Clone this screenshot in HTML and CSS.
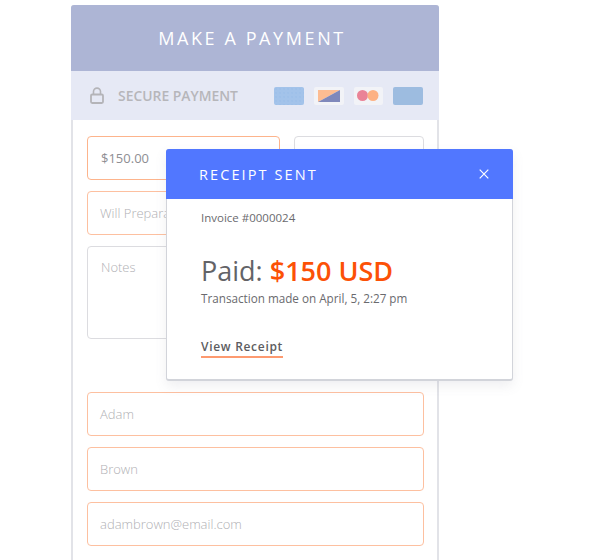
FILE: index.html
```html
<!DOCTYPE html>
<html lang="en">
<head>
    <meta charset="UTF-8">
    <title>Make a payment</title>
    <link rel="stylesheet" href="styles.css">
</head>

<body>
    <div class="wrap">
        <div class="payment">
            <div class="paymentTitle">MAKE A PAYMENT</div>
            <div class="secureBar">
                <svg class="lock" width="14" height="17" viewBox="0 0 14 17">
                    <path d="M3.5 7.5V4.6a3.5 3.5 0 0 1 7 0v2.9" fill="none" stroke="#b4b4b8" stroke-width="1.6"/>
                    <rect x="1" y="7.5" width="12" height="8.5" rx="1.2" fill="none" stroke="#b4b4b8" stroke-width="1.8"/>
                </svg>
                <span class="secureLabel">SECURE PAYMENT</span>
                <div class="cards">
                    <div class="cardIcon cardBlue"></div>
                    <div class="cardIcon cardPale">
                        <svg width="22" height="12" viewBox="0 0 22 12">
                            <polygon points="0,0 22,0 0,12" fill="#fdbc92"/>
                            <polygon points="22,0 22,12 0,12" fill="#7f88bb"/>
                        </svg>
                    </div>
                    <div class="cardIcon cardPale">
                        <svg width="22" height="11" viewBox="0 0 22 11">
                            <circle cx="5.5" cy="5.5" r="5.5" fill="#ea8397"/>
                            <circle cx="16" cy="5.5" r="5.5" fill="#fdb183"/>
                        </svg>
                    </div>
                    <div class="cardIcon cardSteel"></div>
                </div>
            </div>
            <div class="form">
                <div class="row">
                    <div class="field amount">$150.00</div>
                    <div class="field plain"></div>
                </div>
                <div class="field">Will Prepara</div>
                <div class="field notes">Notes</div>
                <div class="spacer"></div>
                <div class="field">Adam</div>
                <div class="field">Brown</div>
                <div class="field">adambrown@email.com</div>
            </div>
        </div>

        <div class="receipt">
            <div class="receiptHead">
                <span class="receiptTitle">RECEIPT SENT</span>
                <svg class="close" width="10" height="10" viewBox="0 0 10 10">
                    <path d="M.7.7l8.6 8.6M9.3.7L.7 9.3" stroke="#fff" stroke-width="1.2" fill="none"/>
                </svg>
            </div>
            <div class="receiptBody">
                <div class="invoice">Invoice #0000024</div>
                <div class="paid">Paid: <b>$150 USD</b></div>
                <div class="made">Transaction made on April, 5, 2:27 pm</div>
                <a class="viewReceipt">View Receipt</a>
            </div>
        </div>
    </div>
</body></html>
```

FILE: styles.css
```css
* {
    margin: 0;
    padding: 0;
    box-sizing: border-box;
}

body {
    background: #fff;
    font-family: "Open Sans", sans-serif;
    overflow: hidden;
}

.wrap {
    position: relative;
    width: 590px;
    height: 560px;
    overflow: hidden;
    padding: 5px 0 0 71px;
}

.payment {
    width: 368px;
    height: 570px;
    border-radius: 3px 3px 0 0;
    border: 2px solid #e2e3e8;
    border-top: none;
    background: #fff;
    display: flex;
    flex-direction: column;
}

.paymentTitle {
    height: 66px;
    margin: 0 -2px;
    padding-right: 6px;
    border-radius: 3px 3px 0 0;
    background: #adb5d5;
    color: #fff;
    font-size: 18px;
    letter-spacing: 2.6px;
    display: flex;
    align-items: center;
    justify-content: center;
}

.secureBar {
    height: 49px;
    margin: 0 -2px;
    padding: 0 16px 0 19px;
    background: #e6e9f5;
    display: flex;
    align-items: center;
}

.secureLabel {
    margin-left: 14px;
    color: #b6b6ba;
    font-size: 13.9px;
    font-weight: 600;
}

.cards {
    margin-left: auto;
    display: flex;
    gap: 10px;
}

.cardIcon {
    width: 30px;
    height: 18px;
    border-radius: 2px;
    display: flex;
    align-items: center;
    justify-content: center;
}

.cardBlue {
    background: #a3c3ea radial-gradient(#9cbee8 0.6px, transparent 0.9px) 0 0 / 4px 4px;
}

.cardPale {
    width: 29.5px;
    background: #f2f3f7;
}

.cardSteel {
    background: #9dbce0;
}

.form {
    padding: 16px 13px 0 14px;
    display: flex;
    flex-direction: column;
    gap: 11px;
}

.row {
    display: flex;
    gap: 14px;
}

.field {
    height: 44px;
    padding: 0 12px;
    border: 1px solid #fdc0a0;
    border-radius: 4px;
    color: #b0b0b4;
    font-size: 13px;
    font-weight: 300;
    display: flex;
    align-items: center;
}

.amount {
    width: 193px;
    padding-left: 13px;
    border-color: #fdb48c;
    color: #8e8e93;
    font-weight: 400;
}

.plain {
    width: 130px;
    border-color: #dcdce0;
}

.notes {
    height: 93px;
    padding: 11px 13px 0;
    align-items: flex-start;
    border-color: #dcdce0;
}

.spacer {
    height: 31px;
}

.receipt {
    position: absolute;
    left: 166px;
    top: 149px;
    width: 347px;
    height: 232px;
    border-radius: 3px;
    background: #fff;
    border: 1px solid #d2d4da;
    border-bottom-width: 2px;
    box-shadow: 0 5px 12px rgba(120, 125, 140, 0.12);
}

.receiptHead {
    height: 50px;
    margin: -1px -1px 0;
    padding: 0 24px 0 33px;
    border-radius: 3px 3px 0 0;
    background: #5177ff;
    display: flex;
    align-items: center;
    justify-content: space-between;
}

.receiptTitle {
    color: #fff;
    font-size: 14.5px;
    font-weight: 500;
    letter-spacing: 2.1px;
}

.receiptBody {
    padding: 11px 34px 0;
    display: flex;
    flex-direction: column;
    align-items: flex-start;
}

.invoice {
    color: #6a6a6e;
    font-size: 11.5px;
    line-height: 16px;
}

.paid {
    margin-top: 27px;
    color: #636367;
    font-size: 27px;
    line-height: 36px;
}

.paid b {
    color: #fc5106;
    font-weight: 600;
}

.made {
    margin-top: 1px;
    color: #6a6a6e;
    font-size: 11.7px;
    line-height: 16px;
}

.viewReceipt {
    margin-top: 33px;
    padding-bottom: 1px;
    border-bottom: 2px solid #fd9a70;
    color: #5c5c60;
    font-size: 12px;
    line-height: 16px;
    font-weight: 600;
    letter-spacing: 0.7px;
}
```
